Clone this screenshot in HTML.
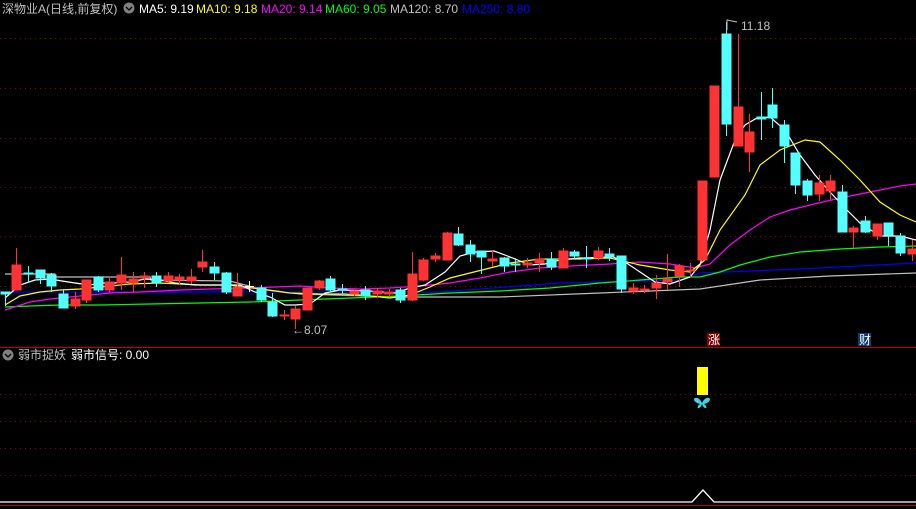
<!DOCTYPE html>
<html><head><meta charset="utf-8"><style>
html,body{margin:0;padding:0;background:#000;width:916px;height:509px;overflow:hidden}
svg{display:block}
text{font-family:"Liberation Sans","Noto Sans CJK SC",sans-serif;font-size:12px}
</style></head><body>
<svg width="916" height="509" viewBox="0 0 916 509" xmlns="http://www.w3.org/2000/svg">
<rect width="916" height="509" fill="#000"/>
<g stroke="#8b0000" stroke-dasharray="1,4" stroke-width="1">
<line x1="0" y1="38.5" x2="916" y2="38.5"/><line x1="0" y1="88.5" x2="916" y2="88.5"/>
<line x1="0" y1="138.5" x2="916" y2="138.5"/><line x1="0" y1="187.5" x2="916" y2="187.5"/>
<line x1="0" y1="236.5" x2="916" y2="236.5"/><line x1="0" y1="286.5" x2="916" y2="286.5"/>
<line x1="0" y1="394.5" x2="916" y2="394.5"/><line x1="0" y1="421.5" x2="916" y2="421.5"/>
<line x1="0" y1="448.5" x2="916" y2="448.5"/><line x1="0" y1="475.5" x2="916" y2="475.5"/>
</g>
<line x1="0" y1="347.5" x2="916" y2="347.5" stroke="#c00000"/>
<line x1="0" y1="505.5" x2="916" y2="505.5" stroke="#c00000"/>
<g fill="none" stroke-width="1.2">
<polyline stroke="#c0c0c0" points="5,274 55,274 56,277 150,277 151,280 230,281 260,289 300,294 400,297 500,297 600,293 700,289 760,280 830,276 916,273"/>
<polyline stroke="#0000ff" points="5,292 440,292 560,283 680,280 700,273 800,269 916,263"/>
<polyline stroke="#00ff00" points="5,307 30,306 60,305 100,305 150,304 200,303 250,302 300,300 350,298 400,296 450,293 500,291 550,288 600,283 640,280 680,277 700,277 720,272 740,265 770,257 800,252 840,249 880,247 916,246"/>
<polyline stroke="#ff00ff" points="5,310 30,302 50,299 80,296 110,293 140,292 180,290 210,289 250,288 275,287 300,286 330,288 360,289 390,288 420,286 450,283 480,278 510,272 540,268 570,266 610,264 640,262 670,264 695,268 710,264 730,245 750,230 770,217 790,210 810,205 840,198 870,192 900,186 916,184"/>
<polyline stroke="#ffff00" points="5,305 20,296 40,292 60,290 80,289 100,287 130,284 160,283 200,285 230,285 260,289 290,293 320,294 345,294 370,296 390,298 410,295 430,287 450,278 470,273 490,268 510,263 540,259 580,259 610,258 640,265 670,270 690,272 705,260 720,230 745,195 760,165 780,150 805,140 820,142 840,160 860,180 880,202 900,215 916,222"/>
<polyline stroke="#ffffff" points="5,298 20,285 35,280 50,279 62,281 75,283 90,285 100,283 115,283 130,282 145,279 160,280 175,283 195,285 225,285 240,285 255,292 270,297 285,305 295,305 310,304 325,293 340,290 370,291 395,293 410,288 425,285 445,272 460,256 475,252 494,251 505,255 520,261 530,265 545,264 560,260 580,258 613,257 625,262 640,272 655,282 670,284 690,277 700,265 710,230 720,180 735,140 745,125 757,118 770,117 785,130 800,155 815,175 830,192 845,208 860,223 880,236 900,236 916,240"/>
</g>
<g stroke-width="1">
<g stroke="#54ffff" fill="#54ffff">
<line x1="5.5" y1="292" x2="5.5" y2="306"/><rect x="1" y="292" width="9" height="2"/>
<line x1="28.5" y1="266" x2="28.5" y2="283"/><rect x="24" y="273" width="9" height="1"/>
<line x1="40.5" y1="270" x2="40.5" y2="284"/><rect x="36" y="270" width="9" height="8"/>
<line x1="51.5" y1="273" x2="51.5" y2="292"/><rect x="47" y="275" width="9" height="11"/>
<line x1="63.5" y1="290" x2="63.5" y2="308"/><rect x="59" y="294" width="9" height="14"/>
<line x1="98.5" y1="276" x2="98.5" y2="292"/><rect x="94" y="277" width="9" height="13"/>
<line x1="156.5" y1="272" x2="156.5" y2="287"/><rect x="152" y="276" width="9" height="7"/>
<line x1="214.5" y1="262" x2="214.5" y2="280"/><rect x="210" y="267" width="9" height="6"/>
<line x1="226.5" y1="272" x2="226.5" y2="294"/><rect x="222" y="273" width="9" height="19"/>
<line x1="261.5" y1="285" x2="261.5" y2="302"/><rect x="257" y="288" width="9" height="12"/>
<line x1="272.5" y1="293" x2="272.5" y2="317"/><rect x="268" y="302" width="9" height="14"/>
<line x1="330.5" y1="276" x2="330.5" y2="292"/><rect x="326" y="279" width="9" height="11"/>
<line x1="342.5" y1="284" x2="342.5" y2="294"/><rect x="338" y="289" width="9" height="1"/>
<line x1="365.5" y1="286" x2="365.5" y2="300"/><rect x="361" y="290" width="9" height="6"/>
<line x1="400.5" y1="288" x2="400.5" y2="303"/><rect x="396" y="290" width="9" height="10"/>
<line x1="458.5" y1="227" x2="458.5" y2="246"/><rect x="454" y="234" width="9" height="11"/>
<line x1="470.5" y1="240" x2="470.5" y2="262"/><rect x="466" y="245" width="9" height="9"/>
<line x1="481.5" y1="251" x2="481.5" y2="274"/><rect x="477" y="251" width="9" height="6"/>
<line x1="504.5" y1="257" x2="504.5" y2="272"/><rect x="500" y="258" width="9" height="8"/>
<line x1="515.5" y1="258" x2="515.5" y2="272"/><rect x="511" y="264" width="9" height="1"/>
<line x1="551.5" y1="252" x2="551.5" y2="270"/><rect x="547" y="259" width="9" height="8"/>
<line x1="574.5" y1="250" x2="574.5" y2="259"/><rect x="570" y="252" width="9" height="4"/>
<line x1="586.5" y1="246" x2="586.5" y2="268"/><rect x="582" y="258" width="9" height="1"/>
<line x1="609.5" y1="248" x2="609.5" y2="261"/><rect x="605" y="254" width="9" height="3"/>
<line x1="621.5" y1="256" x2="621.5" y2="293"/><rect x="617" y="256" width="9" height="33"/>
<line x1="726.5" y1="22" x2="726.5" y2="136"/><rect x="722" y="34" width="9" height="90"/>
<line x1="761.5" y1="92" x2="761.5" y2="140"/><rect x="757" y="117" width="9" height="2"/>
<line x1="772.5" y1="88" x2="772.5" y2="128"/><rect x="768" y="105" width="9" height="13"/>
<line x1="784.5" y1="120" x2="784.5" y2="163"/><rect x="780" y="125" width="9" height="21"/>
<line x1="795.5" y1="153" x2="795.5" y2="194"/><rect x="791" y="153" width="9" height="32"/>
<line x1="807.5" y1="179" x2="807.5" y2="201"/><rect x="803" y="181" width="9" height="14"/>
<line x1="842.5" y1="185" x2="842.5" y2="232"/><rect x="838" y="192" width="9" height="40"/>
<line x1="865.5" y1="216" x2="865.5" y2="233"/><rect x="861" y="221" width="9" height="11"/>
<line x1="888.5" y1="223" x2="888.5" y2="246"/><rect x="884" y="223" width="9" height="12"/>
<line x1="900.5" y1="233" x2="900.5" y2="256"/><rect x="896" y="236" width="9" height="17"/>
</g>
<g stroke="#ff3333" fill="#ff3333">
<line x1="16.5" y1="248" x2="16.5" y2="290"/><rect x="12" y="265" width="9" height="25"/>
<line x1="75.5" y1="292" x2="75.5" y2="309"/><rect x="71" y="299" width="9" height="7"/>
<line x1="86.5" y1="280" x2="86.5" y2="303"/><rect x="82" y="280" width="9" height="20"/>
<line x1="109.5" y1="278" x2="109.5" y2="293"/><rect x="105" y="282" width="9" height="8"/>
<line x1="121.5" y1="257" x2="121.5" y2="290"/><rect x="117" y="275" width="9" height="8"/>
<line x1="133.5" y1="272" x2="133.5" y2="292"/><rect x="129" y="279" width="9" height="4"/>
<line x1="144.5" y1="272" x2="144.5" y2="288"/><rect x="140" y="276" width="9" height="2"/>
<line x1="168.5" y1="272" x2="168.5" y2="283"/><rect x="164" y="276" width="9" height="5"/>
<line x1="179.5" y1="274" x2="179.5" y2="285"/><rect x="175" y="277" width="9" height="3"/>
<line x1="191.5" y1="269" x2="191.5" y2="284"/><rect x="187" y="277" width="9" height="4"/>
<line x1="202.5" y1="250" x2="202.5" y2="272"/><rect x="198" y="262" width="9" height="5"/>
<line x1="237.5" y1="273" x2="237.5" y2="296"/><rect x="233" y="287" width="9" height="9"/>
<line x1="284.5" y1="310" x2="284.5" y2="320"/><rect x="280" y="315" width="9" height="1"/>
<line x1="295.5" y1="306" x2="295.5" y2="329"/><rect x="291" y="309" width="9" height="10"/>
<line x1="307.5" y1="288" x2="307.5" y2="310"/><rect x="303" y="288" width="9" height="22"/>
<line x1="319.5" y1="280" x2="319.5" y2="290"/><rect x="315" y="281" width="9" height="7"/>
<line x1="354.5" y1="289" x2="354.5" y2="296"/><rect x="350" y="291" width="9" height="3"/>
<line x1="377.5" y1="288" x2="377.5" y2="297"/><rect x="373" y="291" width="9" height="3"/>
<line x1="389.5" y1="289" x2="389.5" y2="297"/><rect x="384" y="292" width="9" height="2"/>
<line x1="412.5" y1="252" x2="412.5" y2="301"/><rect x="408" y="274" width="9" height="26"/>
<line x1="423.5" y1="258" x2="423.5" y2="281"/><rect x="419" y="260" width="9" height="20"/>
<line x1="435.5" y1="253" x2="435.5" y2="262"/><rect x="431" y="256" width="9" height="3"/>
<line x1="447.5" y1="232" x2="447.5" y2="260"/><rect x="443" y="233" width="9" height="27"/>
<line x1="492.5" y1="250" x2="492.5" y2="267"/><rect x="488" y="259" width="9" height="2"/>
<line x1="527.5" y1="258" x2="527.5" y2="268"/><rect x="523" y="263" width="9" height="2"/>
<line x1="539.5" y1="253" x2="539.5" y2="272"/><rect x="535" y="259" width="9" height="4"/>
<line x1="563.5" y1="248" x2="563.5" y2="268"/><rect x="559" y="251" width="9" height="17"/>
<line x1="598.5" y1="247" x2="598.5" y2="260"/><rect x="594" y="251" width="9" height="7"/>
<line x1="633.5" y1="283" x2="633.5" y2="294"/><rect x="629" y="288" width="9" height="3"/>
<line x1="644.5" y1="285" x2="644.5" y2="293"/><rect x="640" y="289" width="9" height="1"/>
<line x1="656.5" y1="275" x2="656.5" y2="299"/><rect x="652" y="283" width="9" height="5"/>
<line x1="667.5" y1="254" x2="667.5" y2="290"/><rect x="663" y="279" width="9" height="3"/>
<line x1="679.5" y1="264" x2="679.5" y2="287"/><rect x="675" y="266" width="9" height="10"/>
<line x1="690.5" y1="263" x2="690.5" y2="278"/><rect x="686" y="270" width="9" height="1"/>
<rect x="698" y="181" width="9" height="79"/>
<rect x="710" y="86" width="9" height="91"/>
<line x1="738.5" y1="34" x2="738.5" y2="146"/><rect x="734" y="107" width="9" height="39"/>
<line x1="749.5" y1="114" x2="749.5" y2="172"/><rect x="745" y="132" width="9" height="20"/>
<line x1="819.5" y1="175" x2="819.5" y2="201"/><rect x="815" y="183" width="9" height="11"/>
<line x1="830.5" y1="175" x2="830.5" y2="200"/><rect x="826" y="181" width="9" height="10"/>
<line x1="853.5" y1="226" x2="853.5" y2="248"/><rect x="849" y="228" width="9" height="4"/>
<line x1="877.5" y1="224" x2="877.5" y2="240"/><rect x="873" y="224" width="9" height="12"/>
<line x1="912.5" y1="240" x2="912.5" y2="261"/><rect x="908" y="249" width="9" height="5"/>
</g>
<g stroke="#fff"><line x1="245" y1="286.5" x2="254" y2="286.5"/><line x1="249.5" y1="281" x2="249.5" y2="292"/></g>
</g>
<g stroke="#c0c0c0" fill="none"><polyline points="727,30 727,20 737,22"/></g>
<text x="741" y="30" fill="#c0c0c0">11.18</text>
<text x="292" y="334" fill="#c0c0c0">←8.07</text>
<rect x="707" y="333" width="13" height="13" fill="#8b0000"/><text x="708" y="344" fill="#fff" font-size="11">涨</text>
<rect x="858" y="333" width="13" height="13" fill="#103a6e"/><text x="859" y="344" fill="#fff" font-size="11">财</text>
<text x="2" y="13" fill="#c0c0c0">深物业A(日线,前复权)</text>
<circle cx="129" cy="8" r="5.5" fill="#808080"/><polyline points="126,7 129,10 132,7" stroke="#000" stroke-width="1.3" fill="none"/>
<text x="139" y="13" fill="#fff">MA5: 9.19</text>
<text x="196" y="13" fill="#ffff00">MA10: 9.18</text>
<text x="261" y="13" fill="#ff00ff">MA20: 9.14</text>
<text x="325" y="13" fill="#00ff00">MA60: 9.05</text>
<text x="390" y="13" fill="#c0c0c0">MA120: 8.70</text>
<text x="462" y="13" fill="#0000ff">MA250: 8.80</text>
<circle cx="8" cy="355" r="5.5" fill="#808080"/><polyline points="5,354 8,357 11,354" stroke="#000" stroke-width="1.3" fill="none"/>
<text x="18" y="359" fill="#c0c0c0">弱市捉妖</text>
<text x="71" y="359" fill="#fff">弱市信号: 0.00</text>
<rect x="697" y="367" width="11" height="28" fill="#ffff00"/>
<path d="M702,403 C699,397 695,397 694,399 C694,402 697,403 700,404 C697,406 697,409 699,408 C701,407 702,405 702,403 C702,405 703,407 705,408 C707,409 707,406 704,404 C707,403 710,402 710,399 C709,397 705,397 702,403 Z" fill="#3fd6e6"/>
<polyline points="0,502 692,502 703,490 714,502 916,502" stroke="#fff" stroke-width="1.3" fill="none"/>
</svg>
</body></html>
